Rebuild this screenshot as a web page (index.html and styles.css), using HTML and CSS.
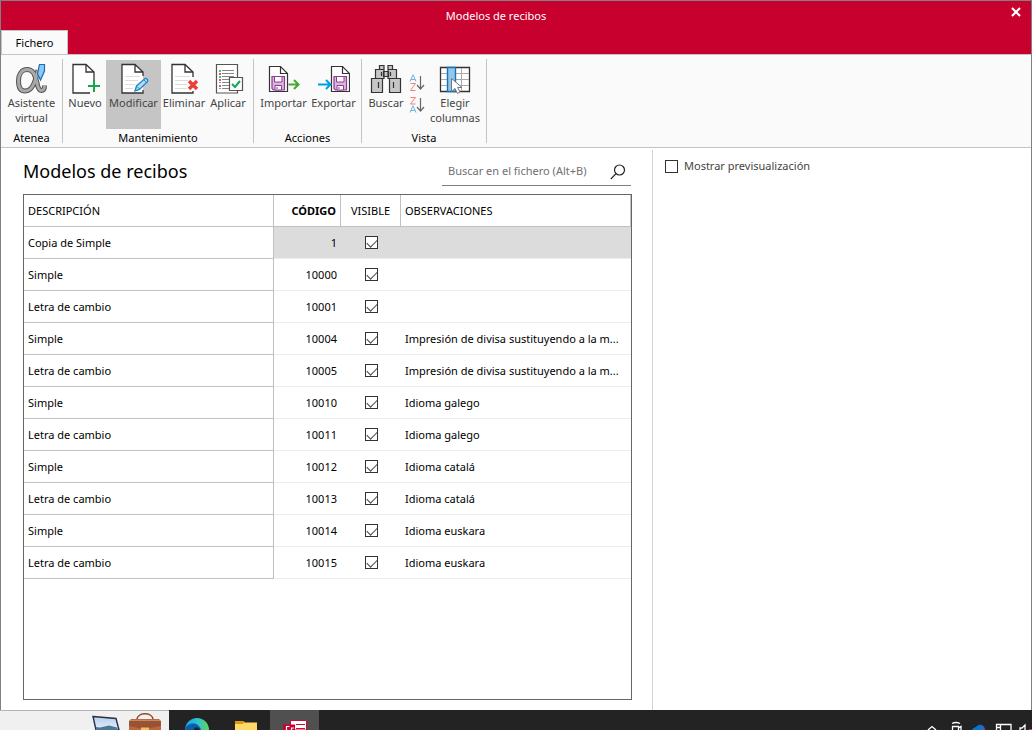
FILE: index.html
```html
<!DOCTYPE html>
<html lang="es">
<head>
<meta charset="utf-8">
<title>Modelos de recibos</title>
<link rel="stylesheet" href="styles.css">
</head>
<body>
<div class="window">
  <header class="titlebar">
    <div class="caption">Modelos de recibos</div>
    <button class="close" type="button" aria-label="Cerrar"><svg width="10" height="10" viewBox="0 0 10 10"><path d="M1 1 9 9M9 1 1 9" stroke="#fff" stroke-width="2.2"/></svg></button>
    <button class="tab" type="button">Fichero</button>
  </header>

  <nav class="ribbon">
    <section class="group group-atenea">
      <div class="tools">
        <button class="tool" type="button">
          <svg width="32" height="32" viewBox="0 0 32 32"><path d="M22 7C19 20 16 28 9 28 4 28 2.500 23 2.500 18 2.500 11 6 6.500 11 6.500 18 6.500 19 13 21 20 22 25 23 27.500 25.500 27.500 27.500 27.500 28.500 25.500 28.500 22.500" fill="none" stroke="#555" stroke-width="5"/><path d="M22 7C19 20 16 28 9 28 4 28 2.500 23 2.500 18 2.500 11 6 6.500 11 6.500 18 6.500 19 13 21 20 22 25 23 27.500 25.500 27.500 27.500 27.500 28.500 25.500 28.500 22.500" fill="none" stroke="#a9a9a9" stroke-width="3"/><path d="M23.500 1.500H28.500V8L24.500 17 21.500 11Z" fill="#8cc8f3" stroke="#1870b8" stroke-width="1.200"/></svg>
          <span>Asistente<br>virtual</span>
        </button>
      </div>
      <h2>Atenea</h2>
    </section>

    <section class="group group-mantenimiento">
      <div class="tools">
        <button class="tool" type="button">
          <svg width="32" height="32" viewBox="0 0 32 32"><path d="M25 18V9L17 1.500H4V30H21" fill="#fff" stroke="#333" stroke-width="1.300"/><path d="M17 1.500V9H25" fill="none" stroke="#333" stroke-width="1.300"/><path d="M25 17V29M19 23H31" stroke="#13a84f" stroke-width="2"/></svg>
          <span>Nuevo</span>
        </button>
        <button class="tool wide active" type="button">
          <svg width="32" height="32" viewBox="0 0 32 32"><path d="M25 14V9L17 1.500H4V30H25V25" fill="#fff"/><path d="M25 13V9L17 1.500H4V30H25V27M17 1.500V9H25" fill="none" stroke="#333" stroke-width="1.300"/><path d="M7 13.500H22M7 17.500H20M7 21.500H17M7 25.500H15" stroke="#ddd"/><path d="M17 28 18.500 23 27 15.500C28.500 15 30.500 17 29.500 18.500L21.500 26.500Z" fill="#b9dcf5" stroke="#2489cb" stroke-width="1.400"/><path d="M19 23.500 21.500 26M26 17 28.500 19.500" stroke="#2489cb"/></svg>
          <span>Modificar</span>
        </button>
        <button class="tool mid" type="button">
          <svg width="32" height="32" viewBox="0 0 32 32"><path d="M25 14V9L17 1.500H4V30H25V28" fill="#fff" stroke="#333" stroke-width="1.300"/><path d="M17 1.500V9H25" fill="none" stroke="#333" stroke-width="1.300"/><path d="M7 13.500H22M7 17.500H20M7 21.500H19M7 25.500H19" stroke="#ddd"/><path d="M21 18 29 26M29 18 21 26" stroke="#ee3e38" stroke-width="3.400"/></svg>
          <span>Eliminar</span>
        </button>
        <button class="tool aplicar" type="button">
          <svg width="32" height="32" viewBox="0 0 32 32"><path d="M4.500 1.500H25.500V30H4.500Z" fill="#fff" stroke="#555" stroke-width="1.200"/><path d="M10 7.500H22M10 10.500H22M10 13.500H22M10 16.500H18M10 19.500H18M10 22.500H17M10 25.500H17" stroke="#888"/><path d="M8 7V9M8 13V15M8 19V20M8 25V26" stroke="#13a84f" stroke-width="1.500"/><path d="M8 10V12M8 16V18M8 22V24" stroke="#d02040" stroke-width="1.500"/><path d="M17.500 14.500H30.500V27.500H17.500Z" fill="#fff" stroke="#555" stroke-width="1.200"/><path d="M20 21 23 24 28 18" fill="none" stroke="#13a84f" stroke-width="2"/></svg>
          <span>Aplicar</span>
        </button>
      </div>
      <h2>Mantenimiento</h2>
    </section>

    <section class="group group-acciones">
      <div class="tools">
        <button class="tool importar" type="button">
          <svg width="32" height="32" viewBox="0 0 32 32"><path d="M1.500 3.500H12.500L19.500 10.500V28.500H1.500Z" fill="#fff" stroke="#333" stroke-width="1.200"/><path d="M12.500 3.500V10.500H19.500" fill="none" stroke="#333" stroke-width="1.200"/><path d="M4 13.500H16.500V27H5.500L4 25.500Z" fill="#ddb5dc" stroke="#8e3b94" stroke-width="1.200"/><path d="M6.500 13.500H14V19H6.500ZM7 22.500H13.500V27H7Z" fill="#fff" stroke="#8e3b94"/><path d="M9 24V26" stroke="#8e3b94"/><path d="M20.500 21.500H30M26 17 30.500 21.500 26 26" fill="none" stroke="#43a82c" stroke-width="2"/></svg>
          <span>Importar</span>
        </button>
        <button class="tool exportar" type="button">
          <svg width="32" height="32" viewBox="0 0 32 32"><path d="M13.500 3.500H24.500L31.500 10.500V28.500H13.500Z" fill="#fff" stroke="#333" stroke-width="1.200"/><path d="M24.500 3.500V10.500H31.500" fill="none" stroke="#333" stroke-width="1.200"/><path d="M16 13.500H28.500V27H17.500L16 25.500Z" fill="#ddb5dc" stroke="#8e3b94" stroke-width="1.200"/><path d="M18.500 13.500H26V19H18.500ZM19 22.500H25.500V27H19Z" fill="#fff" stroke="#8e3b94"/><path d="M21 24V26" stroke="#8e3b94"/><path d="M0 21.500H12M8 17 12.500 21.500 8 26" fill="none" stroke="#009fe3" stroke-width="2"/></svg>
          <span>Exportar</span>
        </button>
      </div>
      <h2>Acciones</h2>
    </section>

    <section class="group group-vista">
      <div class="tools">
        <button class="tool buscar" type="button">
          <svg width="32" height="32" viewBox="0 0 32 32"><g fill="#c6c6c6" stroke="#333" stroke-width="1.200"><path d="M9.500 2.500H14V6.500H9.500ZM18 2.500H22.500V6.500H18ZM13.500 8.500H18.500V13.500H13.500ZM5.500 6.500H14V15.500H5.500ZM18 6.500H26.500V15.500H18ZM1.500 15.500H12.500V29.500H1.500ZM19.500 15.500H30.500V29.500H19.500Z"/></g><path d="M8.500 19V25M23.500 19V25M11.500 9V13M20.500 9V13" stroke="#333" stroke-width="1.200"/></svg>
          <span>Buscar</span>
        </button>
        <div class="sorts">
          <button class="sort" type="button" aria-label="Orden ascendente"><svg width="16" height="18" viewBox="0 0 16 18"><path d="M1 7.500 4 .8 7 7.500M2 5.500H6" fill="none" stroke="#6fb2de"/><path d="M1.500 9.500H6.500L1.500 16.500H6.500" fill="none" stroke="#f08080"/><path d="M11.500 2V15M8 11 11.500 15 15 11" fill="none" stroke="#666" stroke-width="1.200"/></svg></button>
          <button class="sort" type="button" aria-label="Orden descendente"><svg width="16" height="18" viewBox="0 0 16 18"><path d="M1.500 1.500H6.500L1.500 8H6.500" fill="none" stroke="#f08080"/><path d="M1 16.500 4 9.800 7 16.500M2 14.500H6" fill="none" stroke="#6fb2de"/><path d="M11.500 2V15M8 11 11.500 15 15 11" fill="none" stroke="#666" stroke-width="1.200"/></svg></button>
        </div>
        <button class="tool elegir" type="button">
          <svg width="32" height="32" viewBox="0 0 32 32"><path d="M1.500 4.500H30.500V28.500H1.500Z" fill="#fff" stroke="#333" stroke-width="1.300"/><path d="M2 10.500H30M2 16.500H30M2 22.500H30M22.500 5V28" stroke="#aaa"/><path d="M8.500 4.500H16.500V28.500H8.500Z" fill="#93c8ee" stroke="#1673b9" stroke-width="1.400"/><path d="M12.500 15.500V28.500L16 25.500 18.500 30.500 21 29 18.500 24.500H23Z" fill="#fff" stroke="#777"/></svg>
          <span>Elegir<br>columnas</span>
        </button>
      </div>
      <h2>Vista</h2>
    </section>
  </nav>

  <main class="content">
    <section class="records">
      <div class="heading">
        <h1>Modelos de recibos</h1>
        <div class="search">
          <input type="text" placeholder="Buscar en el fichero (Alt+B)" aria-label="Buscar en el fichero">
          <button type="button" aria-label="Buscar"><svg width="16" height="16" viewBox="0 0 16 16"><circle cx="9.500" cy="6" r="5" fill="none" stroke="#222" stroke-width="1.200"/><path d="M6 9.700.8 15" stroke="#222" stroke-width="1.200"/></svg></button>
        </div>
      </div>
      <div class="grid">
        <table>
          <colgroup><col class="col-desc"><col class="col-code"><col class="col-visible"><col></colgroup>
          <thead><tr><th>DESCRIPCIÓN</th><th class="code">CÓDIGO</th><th class="visible">VISIBLE</th><th>OBSERVACIONES</th></tr></thead>
          <tbody>
            <tr class="selected"><td>Copia de Simple</td><td class="code">1</td><td class="visible"><input type="checkbox" aria-label="Visible" checked></td><td></td></tr>
            <tr><td>Simple</td><td class="code">10000</td><td class="visible"><input type="checkbox" aria-label="Visible" checked></td><td></td></tr>
            <tr><td>Letra de cambio</td><td class="code">10001</td><td class="visible"><input type="checkbox" aria-label="Visible" checked></td><td></td></tr>
            <tr><td>Simple</td><td class="code">10004</td><td class="visible"><input type="checkbox" aria-label="Visible" checked></td><td>Impresión de divisa sustituyendo a la m...</td></tr>
            <tr><td>Letra de cambio</td><td class="code">10005</td><td class="visible"><input type="checkbox" aria-label="Visible" checked></td><td>Impresión de divisa sustituyendo a la m...</td></tr>
            <tr><td>Simple</td><td class="code">10010</td><td class="visible"><input type="checkbox" aria-label="Visible" checked></td><td>Idioma galego</td></tr>
            <tr><td>Letra de cambio</td><td class="code">10011</td><td class="visible"><input type="checkbox" aria-label="Visible" checked></td><td>Idioma galego</td></tr>
            <tr><td>Simple</td><td class="code">10012</td><td class="visible"><input type="checkbox" aria-label="Visible" checked></td><td>Idioma catalá</td></tr>
            <tr><td>Letra de cambio</td><td class="code">10013</td><td class="visible"><input type="checkbox" aria-label="Visible" checked></td><td>Idioma catalá</td></tr>
            <tr><td>Simple</td><td class="code">10014</td><td class="visible"><input type="checkbox" aria-label="Visible" checked></td><td>Idioma euskara</td></tr>
            <tr><td>Letra de cambio</td><td class="code">10015</td><td class="visible"><input type="checkbox" aria-label="Visible" checked></td><td>Idioma euskara</td></tr>
          </tbody>
        </table>
      </div>
    </section>
    <aside class="preview">
      <label><input type="checkbox"> Mostrar previsualización</label>
    </aside>
  </main>
</div>

<footer class="taskbar">
  <div class="task-light">
    <svg width="28" height="20" viewBox="0 0 28 20"><defs><linearGradient id="sky" x1="0" y1="0" x2="0" y2="1"><stop offset="0" stop-color="#b5cdf0"/><stop offset="1" stop-color="#e8f0fa"/></linearGradient></defs><path d="M1 6.500 24 8.500 27 20H4Z" fill="url(#sky)" stroke="#26303c" stroke-width="1.400"/><path d="M3.500 17 8 17.500 17 15.500 25 17.500 26 20H4.500Z" fill="#4c7795"/></svg>
    <svg width="34" height="20" viewBox="0 0 34 20"><path d="M9 9C10 2 24 2 25 9" fill="none" stroke="#8d4a2c" stroke-width="1.600"/><path d="M3 9H31L33 11V20H1V11Z" fill="#b8693f"/><path d="M1 11H33V16L20 18.500H13L1 16Z" fill="#9a5233"/><path d="M2 10.500H32" stroke="#c48a64"/><path d="M13 17.500H21V20H13Z" fill="#f2c060"/></svg>
  </div>
  <div class="task-apps">
    <div class="task"><svg width="24" height="20" viewBox="0 0 24 20"><defs><linearGradient id="edge"><stop offset="0" stop-color="#1a9de0"/><stop offset=".5" stop-color="#2cc3d5"/><stop offset="1" stop-color="#62d45b"/></linearGradient></defs><circle cx="12" cy="20" r="12" fill="url(#edge)"/><path d="M0 20C1 13 13 10 16 20Z" fill="#0b5da8"/><path d="M9 20C9 17 13 16 15 20Z" fill="#202020"/></svg></div>
    <div class="task"><svg width="24" height="20" viewBox="0 0 24 20"><path d="M1 11H9L11 12.500H23V20H1Z" fill="#ffd968"/><path d="M1 11H9L10 12.500 9 14H1Z" fill="#d99b13"/></svg></div>
    <div class="task active"><svg width="24" height="20" viewBox="0 0 24 20"><path d="M7.500 10.500H23.500V20H7.500Z" fill="#fff" stroke="#cf0a35"/><path d="M13 14.500H22M13 18.500H22" stroke="#cf0a35"/><path d="M0 14.500H12V20H0Z" fill="#c80030"/><path d="M3.500 20V16.500H6.500M8.500 20V18H11" fill="none" stroke="#fff" stroke-width="1.200"/></svg></div>
  </div>
  <div class="tray">
    <svg width="108" height="20" viewBox="0 0 108 20"><g fill="none" stroke="#fff" stroke-width="1.300"><path d="M4 20 8 16.500 12 20"/><path d="M28 13.500Q32 11.500 36 13.500M28.500 20V16.500H34.500V20M34.500 18 37 16.500V20"/><path d="M72.500 20V14.500H87V20M73 17.500H77M76.500 15V20"/><path d="M96 20V18H98L101 15V20"/></g><path d="M48 20C49 17 52 18 53 16 57 13 61 16 61 20Z" fill="#0b72d0"/><path d="M57 20 58.500 19H61V20ZM105 19H108V20H105Z" fill="#e03535"/></svg>
  </div>
</footer>
</body>
</html>
```

FILE: styles.css
```css
* { box-sizing: border-box; }

body {
  margin: 0;
  height: 100vh;
  display: flex;
  flex-direction: column;
  overflow: hidden;
  background: #fff;
  color: #000;
  font: 11px/16px "Noto Sans", "Open Sans", sans-serif;
}

button {
  margin: 0;
  padding: 0;
  border: 0;
  background: none;
  color: inherit;
  font: inherit;
}

svg { display: block; flex: none; }
h1, h2 { margin: 0; font-weight: 400; }

.window {
  flex: 1;
  min-height: 0;
  display: flex;
  flex-direction: column;
  border: 1px solid #808080;
  border-bottom: 0;
}

.titlebar {
  display: grid;
  grid-template-columns: 68px 1fr 68px;
  grid-template-rows: 29px 24px;
  background: #c8002d;
}
.caption {
  grid-column: 2;
  padding-right: 40px;
  align-self: center;
  text-align: center;
  color: #fff;
}
.close {
  justify-self: end;
  align-self: start;
  padding: 6px 10px;
}
.tab {
  grid-column: 1;
  width: 67px;
  border: 1px solid #c4c4c4;
  border-bottom: 0;
  background: #fafafa;
  margin-bottom: -1px;
}

.ribbon {
  display: flex;
  padding: 4px 0;
  border-top: 1px solid #c4c4c4;
  border-bottom: 1px solid #c4c4c4;
  background: #fafafa;
}
.group {
  display: flex;
  flex-direction: column;
  border-right: 1px solid #c4c4c4;
  height: 84px;
}
.group-atenea { width: 62px; }
.group-mantenimiento { width: 191px; }
.group-acciones { width: 108px; }
.group-vista { width: 125px; }
.tools {
  flex: none;
  height: 70px;
  display: flex;
  justify-content: center;
  padding-top: 1px;
}
.group-mantenimiento .tools {
  justify-content: flex-start;
  padding-left: 1px;
}
.group-acciones .tools { padding-left: 2px; }
.group h2 {
  text-align: center;
  font-size: 11px;
  line-height: 18px;
}
.tool {
  width: 42px;
  height: 69px;
  padding-top: 3px;
  display: flex;
  flex-direction: column;
  align-items: center;
  color: #444;
  line-height: 15px;
  white-space: nowrap;
}
.wide { width: 55px; }
.mid { width: 46px; }
.active { background: #c5c5c5; }
.importar, .exportar { width: 50px; }
.sorts {
  display: flex;
  flex-direction: column;
  gap: 4px;
  padding-top: 14px;
}
.buscar { width: 46px; }
.elegir { width: 60px; }

.content {
  flex: 1;
  min-height: 0;
  display: grid;
  grid-template-columns: 652fr 378fr;
  padding-top: 2px;
}
.records {
  min-width: 0;
  display: flex;
  flex-direction: column;
  padding: 8px 20px 10px 22px;
  border-right: 1px solid #d4d4d4;
}
.heading {
  display: flex;
  justify-content: space-between;
  height: 36px;
}
h1 {
  font-size: 18px;
  line-height: 26px;
}
.search {
  display: flex;
  align-items: center;
  width: 189px;
  height: 28px;
  margin-right: 1px;
  padding: 0 5px 0 6px;
  border-bottom: 1px solid #808080;
}
.search input {
  flex: 1;
  min-width: 0;
  height: 18px;
  padding: 0 0 2px;
  border: 0;
  outline: 0;
  background: none;
  color: #333;
  font: inherit;
}
.search input::placeholder { color: #707070; }

.grid {
  flex: 1;
  min-height: 0;
  border: 1px solid #666;
}
table {
  width: 100%;
  table-layout: fixed;
  border-collapse: separate;
  border-spacing: 0;
}
.col-desc { width: 250px; }
.col-code { width: 67px; }
.col-visible { width: 60px; }
th, td {
  height: 32px;
  padding: 0 4px;
  border-bottom: 1px solid #ececec;
  text-align: left;
  font-weight: 400;
  white-space: nowrap;
  overflow: hidden;
}
th {
  border-right: 1px solid #c0c0c0;
  border-bottom-color: #c0c0c0;
}
td:first-child {
  border-right: 1px solid #c0c0c0;
  border-bottom-color: #c0c0c0;
}
.code { text-align: right; }
th.code { font-weight: 700; }
.visible { text-align: center; }
.selected td:not(:first-child) { background: #dcdcdc; }

input[type="checkbox"] {
  appearance: none;
  display: block;
  flex: none;
  width: 13px;
  height: 13px;
  margin: 0;
  border: 1px solid #333;
  background: #fff;
}
td input[type="checkbox"] { margin: 0 auto; }
input[type="checkbox"]:checked::before {
  content: "";
  display: block;
  width: 9px;
  height: 5px;
  margin: 2px 1px;
  border: solid #444;
  border-width: 0 0 1px 1px;
  transform: rotate(-45deg);
}

.preview { padding: 8px 12px; }
.preview label {
  display: flex;
  align-items: center;
  gap: 6px;
  color: #444;
}

.taskbar {
  display: flex;
  height: 20px;
  overflow: hidden;
  background: #232323;
}
.task-light {
  width: 169px;
  display: flex;
  justify-content: flex-end;
  gap: 8px;
  padding-right: 7px;
  background: #f0f0f0;
  box-shadow: inset 0 1px #b4b4b4;
}
.task-apps { display: flex; padding-left: 3px; }
.task {
  width: 49px;
  display: flex;
  justify-content: center;
}
.task.active { background: #505050; }
.tray { margin-left: auto; }
```
